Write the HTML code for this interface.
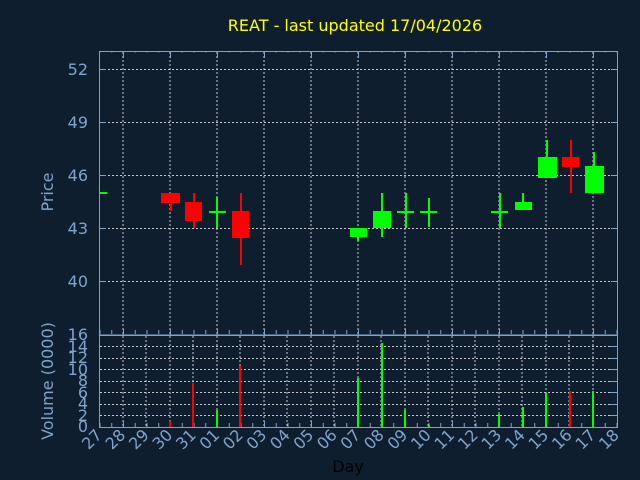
<!DOCTYPE html>
<html><head><style>
html,body{margin:0;padding:0;background:#0f1e2f;}
svg{display:block;}
text{font-family:"DejaVu Sans","Liberation Sans",sans-serif;}
</style></head><body>
<svg width="640" height="480" viewBox="0 0 640 480" xmlns="http://www.w3.org/2000/svg">
<rect width="640" height="480" fill="#0f1e2f"/>
<text x="355" y="31" fill="#ffff00" font-size="16" text-anchor="middle">REAT - last updated 17/04/2026</text>

<!-- price grid -->
<g stroke="#c8c8c8" stroke-width="1" stroke-dasharray="2,2" fill="none">
<line x1="100" y1="69.5" x2="617" y2="69.5"/>
<line x1="100" y1="122.5" x2="617" y2="122.5"/>
<line x1="100" y1="175.5" x2="617" y2="175.5"/>
<line x1="100" y1="228.5" x2="617" y2="228.5"/>
<line x1="100" y1="281.5" x2="617" y2="281.5"/>
<line x1="123" y1="52" x2="123" y2="334"/>
<line x1="170" y1="52" x2="170" y2="334"/>
<line x1="217" y1="52" x2="217" y2="334"/>
<line x1="264" y1="52" x2="264" y2="334"/>
<line x1="311" y1="52" x2="311" y2="334"/>
<line x1="358" y1="52" x2="358" y2="334"/>
<line x1="405" y1="52" x2="405" y2="334"/>
<line x1="452" y1="52" x2="452" y2="334"/>
<line x1="499" y1="52" x2="499" y2="334"/>
<line x1="546" y1="52" x2="546" y2="334"/>
<line x1="593" y1="52" x2="593" y2="334"/>
</g>
<!-- volume grid -->
<g stroke="#c8c8c8" stroke-width="1" stroke-dasharray="2,2" fill="none">
<line x1="100" y1="346.5" x2="617" y2="346.5"/>
<line x1="100" y1="358.5" x2="617" y2="358.5"/>
<line x1="100" y1="369.5" x2="617" y2="369.5"/>
<line x1="100" y1="381.5" x2="617" y2="381.5"/>
<line x1="100" y1="392.5" x2="617" y2="392.5"/>
<line x1="100" y1="404.5" x2="617" y2="404.5"/>
<line x1="100" y1="415.5" x2="617" y2="415.5"/>
<line x1="123" y1="336" x2="123" y2="427"/><line x1="146" y1="336" x2="146" y2="427"/>
<line x1="170" y1="336" x2="170" y2="427"/><line x1="193" y1="336" x2="193" y2="427"/>
<line x1="217" y1="336" x2="217" y2="427"/><line x1="240" y1="336" x2="240" y2="427"/>
<line x1="264" y1="336" x2="264" y2="427"/><line x1="287" y1="336" x2="287" y2="427"/>
<line x1="311" y1="336" x2="311" y2="427"/><line x1="334" y1="336" x2="334" y2="427"/>
<line x1="358" y1="336" x2="358" y2="427"/><line x1="381" y1="336" x2="381" y2="427"/>
<line x1="405" y1="336" x2="405" y2="427"/><line x1="428" y1="336" x2="428" y2="427"/>
<line x1="452" y1="336" x2="452" y2="427"/><line x1="475" y1="336" x2="475" y2="427"/>
<line x1="499" y1="336" x2="499" y2="427"/><line x1="522" y1="336" x2="522" y2="427"/>
<line x1="546" y1="336" x2="546" y2="427"/><line x1="569" y1="336" x2="569" y2="427"/>
<line x1="593" y1="336" x2="593" y2="427"/>
</g>

<!-- axes -->
<g stroke="#7fa4cc" stroke-width="1" fill="none">
<rect x="99.5" y="51.5" width="518" height="283.5"/>
<rect x="99.5" y="335.5" width="518" height="92"/>
<line x1="99.5" y1="55" x2="617" y2="55" stroke-dasharray="1,10.75" stroke-dashoffset="-11.75" transform="translate(0,-3)" />
<line x1="99.5" y1="332" x2="617" y2="332" stroke-width="4" stroke-dasharray="1,10.75" stroke-dashoffset="-11.75"/>
<line x1="99.5" y1="425" x2="617" y2="425" stroke-width="4" stroke-dasharray="1,10.75" stroke-dashoffset="-11.75"/>
<line x1="99.5" y1="55" x2="617" y2="55" stroke-width="6" stroke-dasharray="1,46" stroke-dashoffset="-23.5"/>
<line x1="99.5" y1="332" x2="617" y2="332" stroke-width="6" stroke-dasharray="1,46" stroke-dashoffset="-23.5"/>
<line x1="99.5" y1="424" x2="617" y2="424" stroke-width="6" stroke-dasharray="1,46" stroke-dashoffset="-23.5"/>
<g stroke-width="1">
<line x1="100" y1="69.5" x2="106" y2="69.5"/><line x1="611" y1="69.5" x2="617" y2="69.5"/>
<line x1="100" y1="122.5" x2="106" y2="122.5"/><line x1="611" y1="122.5" x2="617" y2="122.5"/>
<line x1="100" y1="175.5" x2="106" y2="175.5"/><line x1="611" y1="175.5" x2="617" y2="175.5"/>
<line x1="100" y1="228.5" x2="106" y2="228.5"/><line x1="611" y1="228.5" x2="617" y2="228.5"/>
<line x1="100" y1="281.5" x2="106" y2="281.5"/><line x1="611" y1="281.5" x2="617" y2="281.5"/>
<line x1="610" y1="346.5" x2="617" y2="346.5"/><line x1="610" y1="358.5" x2="617" y2="358.5"/>
<line x1="610" y1="369.5" x2="617" y2="369.5"/><line x1="610" y1="381.5" x2="617" y2="381.5"/>
<line x1="610" y1="392.5" x2="617" y2="392.5"/><line x1="610" y1="404.5" x2="617" y2="404.5"/>
<line x1="610" y1="415.5" x2="617" y2="415.5"/>
</g>
</g>

<!-- candles -->
<g fill="#00ff00" stroke="none">
<rect x="99" y="192" width="8" height="2"/>
<rect x="216" y="197" width="2" height="31"/><rect x="209" y="211" width="17" height="2"/>
<rect x="357" y="228" width="2" height="13"/><rect x="350" y="228" width="17" height="9"/>
<rect x="381" y="193" width="2" height="44"/><rect x="373" y="211" width="18" height="17"/>
<rect x="405" y="193" width="2" height="35"/><rect x="397" y="211" width="17" height="2"/>
<rect x="428" y="198" width="2" height="29"/><rect x="420" y="211" width="17" height="2"/>
<rect x="499" y="193" width="2" height="35"/><rect x="491" y="211" width="17" height="2"/>
<rect x="522" y="193" width="2" height="10"/><rect x="515" y="202" width="17" height="8"/>
<rect x="546" y="140" width="2" height="18"/><rect x="538" y="157" width="19" height="21"/>
<rect x="593" y="152" width="2" height="15"/><rect x="585" y="166" width="19" height="27"/>
</g>
<g fill="#ff0000" stroke="none">
<rect x="170" y="200" width="2" height="11"/><rect x="161" y="193" width="19" height="10"/>
<rect x="193" y="193" width="2" height="35"/><rect x="185" y="202" width="17" height="19"/>
<rect x="240" y="193" width="2" height="72"/><rect x="232" y="211" width="17" height="27"/>
<rect x="570" y="140" width="2" height="53"/><rect x="562" y="157" width="17" height="10"/>
</g>

<!-- volume bars -->
<g stroke-width="2">
<line x1="170" y1="421" x2="170" y2="427" stroke="#ff0000"/>
<line x1="193" y1="383" x2="193" y2="427" stroke="#ff0000"/>
<line x1="217" y1="410" x2="217" y2="427" stroke="#00ff00"/>
<line x1="240" y1="366" x2="240" y2="427" stroke="#ff0000"/>
<line x1="358" y1="378" x2="358" y2="427" stroke="#00ff00"/>
<line x1="382" y1="343" x2="382" y2="427" stroke="#00ff00"/>
<line x1="405" y1="410" x2="405" y2="427" stroke="#00ff00"/>
<line x1="429" y1="425" x2="429" y2="427" stroke="#00ff00"/>
<line x1="499" y1="414" x2="499" y2="427" stroke="#00ff00"/>
<line x1="523" y1="407" x2="523" y2="427" stroke="#00ff00"/>
<line x1="546" y1="393" x2="546" y2="427" stroke="#00ff00"/>
<line x1="570" y1="391" x2="570" y2="427" stroke="#ff0000"/>
<line x1="593" y1="391" x2="593" y2="427" stroke="#00ff00"/>
</g>

<!-- y labels -->
<g fill="#7fa4cc" font-size="16" text-anchor="end">
<text x="88" y="75">52</text>
<text x="88" y="128">49</text>
<text x="88" y="181">46</text>
<text x="88" y="234">43</text>
<text x="88" y="287">40</text>
<text x="88" y="340">16</text>
<text x="88" y="352">14</text>
<text x="88" y="363">12</text>
<text x="88" y="375">10</text>
<text x="88" y="386">8</text>
<text x="88" y="398">6</text>
<text x="88" y="409">4</text>
<text x="88" y="421">2</text>
<text x="88" y="432">0</text>
</g>
<g fill="#7fa4cc" font-size="16" text-anchor="middle">
<text transform="translate(53,192) rotate(-90)">Price</text>
<text transform="translate(53,381) rotate(-90)">Volume (0000)</text>
</g>
<!-- x labels -->
<g fill="#7fa4cc" font-size="16" text-anchor="end">
<text transform="translate(103,436) rotate(-45)">27</text>
<text transform="translate(126.5,436) rotate(-45)">28</text>
<text transform="translate(150,436) rotate(-45)">29</text>
<text transform="translate(173.5,436) rotate(-45)">30</text>
<text transform="translate(197,436) rotate(-45)">31</text>
<text transform="translate(220.5,436) rotate(-45)">01</text>
<text transform="translate(244,436) rotate(-45)">02</text>
<text transform="translate(267.5,436) rotate(-45)">03</text>
<text transform="translate(291,436) rotate(-45)">04</text>
<text transform="translate(314.5,436) rotate(-45)">05</text>
<text transform="translate(338,436) rotate(-45)">06</text>
<text transform="translate(361.5,436) rotate(-45)">07</text>
<text transform="translate(385,436) rotate(-45)">08</text>
<text transform="translate(408.5,436) rotate(-45)">09</text>
<text transform="translate(432,436) rotate(-45)">10</text>
<text transform="translate(455.5,436) rotate(-45)">11</text>
<text transform="translate(479,436) rotate(-45)">12</text>
<text transform="translate(502.5,436) rotate(-45)">13</text>
<text transform="translate(526,436) rotate(-45)">14</text>
<text transform="translate(549.5,436) rotate(-45)">15</text>
<text transform="translate(573,436) rotate(-45)">16</text>
<text transform="translate(596.5,436) rotate(-45)">17</text>
<text transform="translate(620,436) rotate(-45)">18</text>
</g>
<text x="348" y="472" fill="#000000" font-size="16" text-anchor="middle">Day</text>
</svg>
</body></html>
